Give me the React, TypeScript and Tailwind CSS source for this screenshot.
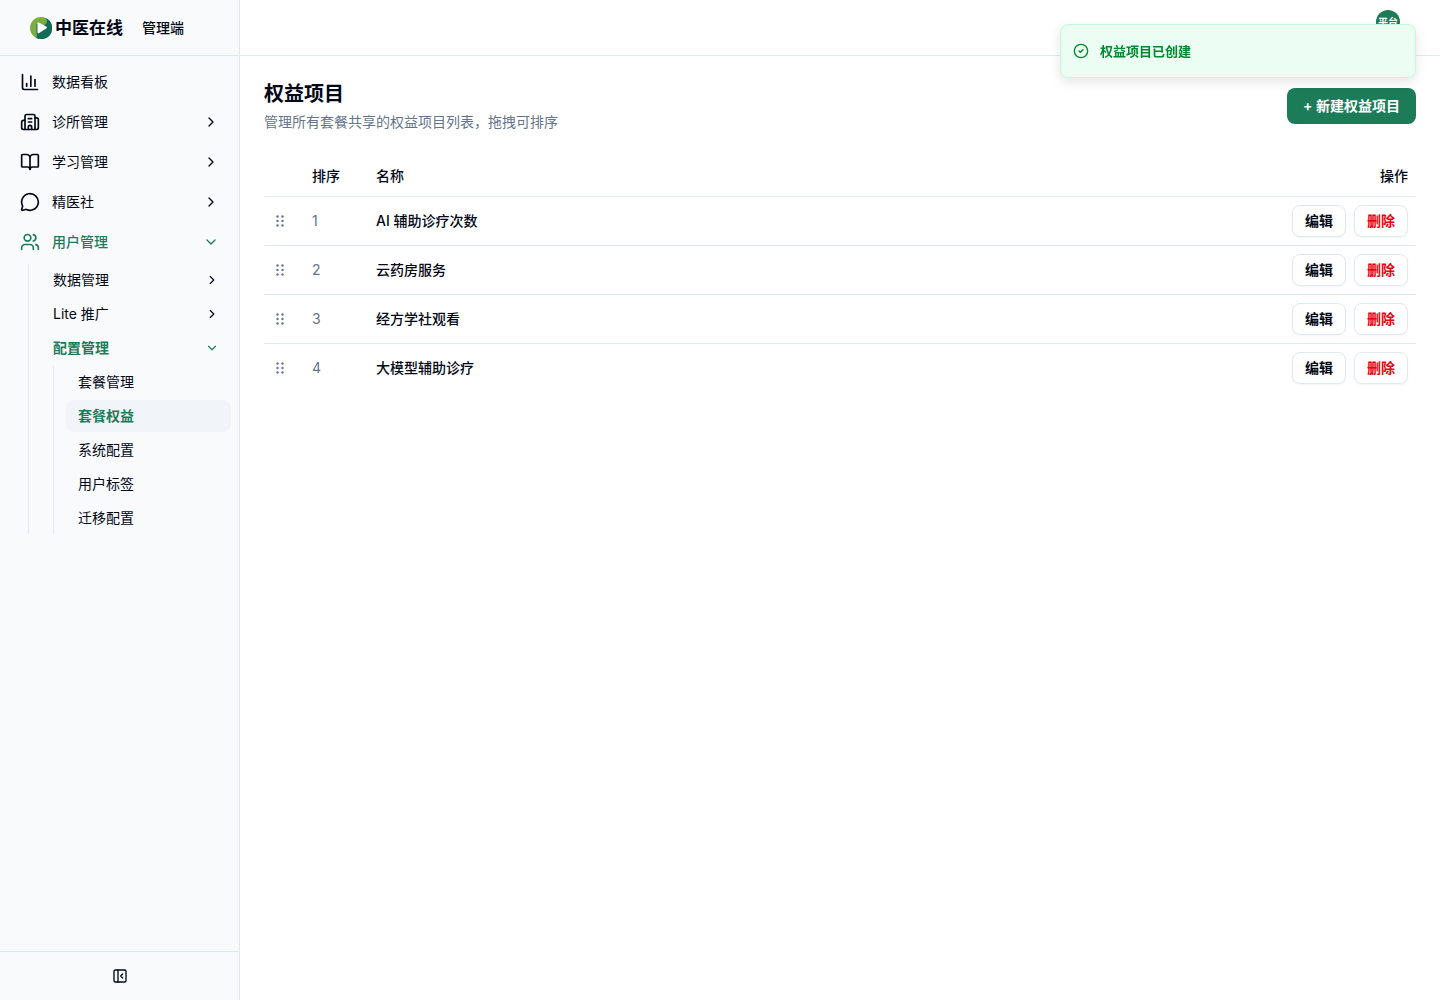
import React from "react";
import {
  BookOpen,
  Building2,
  ChartColumn,
  ChevronDown,
  ChevronRight,
  CircleCheck,
  MessageCircle,
  PanelLeftClose,
  Users,
} from "lucide-react";

const benefits = ["AI 辅助诊疗次数", "云药房服务", "经方学社观看", "大模型辅助诊疗"];

const topItems = [
  { label: "数据看板", Icon: ChartColumn, expandable: false },
  { label: "诊所管理", Icon: Building2, expandable: true },
  { label: "学习管理", Icon: BookOpen, expandable: true },
  { label: "精医社", Icon: MessageCircle, expandable: true },
];

const configItems = ["套餐管理", "套餐权益", "系统配置", "用户标签", "迁移配置"];

function Logo() {
  return (
    <svg viewBox="0 0 22 22" className="size-[22px]" aria-hidden="true">
      <circle cx="11" cy="11" r="11" fill="#7cac45" />
      <path d="M15 0.800A11 11 0 1 1 6 20.800C7.500 19.500 6.500 17 6.500 14V7L13 8.500C18 7 18 3 15 0.800Z" fill="#136b58" />
      <path d="M7.500 6.700Q7.500 4.800 9.200 5.700L16.200 9.600Q17.800 10.600 16.200 11.600L9.200 16Q7.500 16.900 7.500 15Z" fill="#fff" />
    </svg>
  );
}

function DragHandle() {
  return (
    <svg viewBox="0 0 16 16" className="size-4" fill="currentColor" aria-hidden="true">
      {[3.5, 8, 12.5].map((y) => (
        <React.Fragment key={y}>
          <circle cx="5.500" cy={y} r="1.200" />
          <circle cx="10.500" cy={y} r="1.200" />
        </React.Fragment>
      ))}
    </svg>
  );
}

function SubGroup({ label, open = false }: { label: string; open?: boolean }) {
  return (
    <button
      type="button"
      aria-expanded={open}
      className={
        "flex h-8 w-full items-center justify-between rounded-lg px-3 text-left " +
        (open ? "font-semibold text-[#1c7c5a]" : "")
      }
    >
      {label}
      {open ? <ChevronDown className="size-3.5" /> : <ChevronRight className="size-3.5" />}
    </button>
  );
}

function Sidebar() {
  return (
    <aside className="flex w-60 shrink-0 flex-col border-r border-[#e2e8f0] bg-[#f9fafc]">
      <div className="flex h-14 shrink-0 items-center border-b border-[#e2e8f0] pl-[30px]">
        <Logo />
        <span className="ml-[3px] text-[17px] leading-6 font-semibold">中医在线</span>
        <span className="ml-[19px] font-medium">管理端</span>
      </div>
      <nav className="flex-1 p-2">
        <ul className="flex flex-col gap-1">
          {topItems.map(({ label, Icon, expandable }) => (
            <li key={label}>
              <button type="button" className="flex h-9 w-full items-center gap-3 rounded-lg px-3 text-left">
                <Icon className="size-5" />
                <span className="flex-1">{label}</span>
                {expandable && <ChevronRight className="size-4" />}
              </button>
            </li>
          ))}
          <li>
            <button
              type="button"
              aria-expanded="true"
              className="flex h-9 w-full items-center gap-3 rounded-lg px-3 text-left font-medium text-[#1c7c5a]"
            >
              <Users className="size-5" />
              <span className="flex-1">用户管理</span>
              <ChevronDown className="size-4" />
            </button>
            <ul className="mt-1 ml-5 flex flex-col gap-0.5 border-l border-[#e2e8f0] pl-3">
              <li>
                <SubGroup label="数据管理" />
              </li>
              <li>
                <SubGroup label="Lite 推广" />
              </li>
              <li>
                <SubGroup label="配置管理" open />
                <ul className="mt-0.5 ml-3 flex flex-col gap-0.5 border-l border-[#e2e8f0] pl-3">
                  {configItems.map((label) => (
                    <li key={label}>
                      <a
                        href="#"
                        className={
                          "flex h-8 items-center rounded-lg px-3 " +
                          (label === "套餐权益" ? "bg-[#f1f5f9] font-semibold text-[#1c7c5a]" : "")
                        }
                      >
                        {label}
                      </a>
                    </li>
                  ))}
                </ul>
              </li>
            </ul>
          </li>
        </ul>
      </nav>
      <div className="flex justify-center border-t border-[#e2e8f0] p-2">
        <button type="button" aria-label="收起侧栏" className="flex size-8 items-center justify-center">
          <PanelLeftClose className="size-4" />
        </button>
      </div>
    </aside>
  );
}

export default function App() {
  return (
    <div className="flex min-h-screen bg-white font-['Inter','Noto_Sans_CJK_SC',sans-serif] text-sm text-[#020817]">
      <Sidebar />
      <div className="flex min-w-0 flex-1 flex-col">
        <header className="flex h-14 shrink-0 justify-end border-b border-[#e2e8f0] px-10 pt-2.5">
          <button
            type="button"
            className="flex size-6 items-center justify-center rounded-full bg-[#1c7c5a] text-[10px] font-semibold text-white"
          >
            平台
          </button>
        </header>
        <main className="p-6">
          <div className="flex items-center justify-between">
            <div>
              <h1 className="text-xl leading-7 font-semibold">权益项目</h1>
              <p className="mt-1 leading-5 text-[#64748b]">管理所有套餐共享的权益项目列表，拖拽可排序</p>
            </div>
            <button type="button" className="h-9 rounded-lg bg-[#1c7c5a] px-4 font-semibold text-white">
              + 新建权益项目
            </button>
          </div>
          <table className="mt-6 w-full table-fixed">
            <thead>
              <tr className="h-10 border-b border-[#e2e8f0]">
                <th className="w-10" />
                <th className="w-16 px-2 text-left font-medium">排序</th>
                <th className="px-2 text-left font-medium">名称</th>
                <th className="w-40 px-2 text-right font-medium">操作</th>
              </tr>
            </thead>
            <tbody>
              {benefits.map((name, i) => (
                <tr key={name} className="border-b border-[#e2e8f0] last:border-b-0">
                  <td className="px-2 text-[#64748b]">
                    <DragHandle />
                  </td>
                  <td className="px-2 text-[#64748b]">{i + 1}</td>
                  <td className="px-2 font-medium">{name}</td>
                  <td className="p-2">
                    <div className="flex justify-end gap-2">
                      <button type="button" className="h-8 rounded-lg border border-[#e2e8f0] px-3 font-semibold shadow-xs">
                        编辑
                      </button>
                      <button
                        type="button"
                        className="h-8 rounded-lg border border-[#e2e8f0] px-3 font-semibold text-[#e7000b] shadow-xs"
                      >
                        删除
                      </button>
                    </div>
                  </td>
                </tr>
              ))}
            </tbody>
          </table>
        </main>
      </div>
      <div
        role="status"
        className="fixed top-6 right-6 flex w-[356px] items-center gap-[11px] rounded-lg border border-[#bffcd9] bg-[#ecfdf3] px-3 py-4 text-[13px] leading-5 font-semibold text-[#008a2e] shadow-[0_4px_12px_rgba(0,0,0,0.1)]"
      >
        <CircleCheck className="size-4" />
        权益项目已创建
      </div>
    </div>
  );
}
